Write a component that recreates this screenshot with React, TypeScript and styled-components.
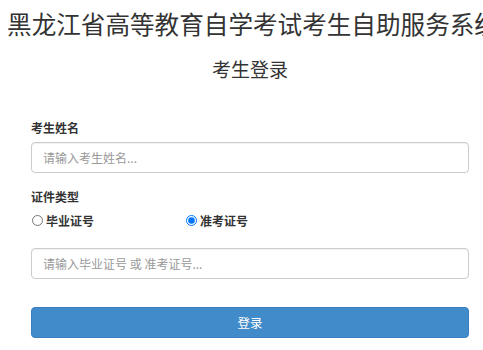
import React, { useState } from "react";
import styled, { createGlobalStyle } from "styled-components";

const GlobalStyle = createGlobalStyle`
  body {
    margin: 0;
    background: #fff;
    font-family: "Noto Sans CJK SC", "Liberation Sans", sans-serif;
    color: #333;
  }
`;

const Page = styled.div`
  width: 500px;
`;

const Title = styled.h1`
  margin: 0;
  padding-left: 6px;
  height: 46px;
  line-height: 46px;
  font-size: 24.6px;
  font-weight: normal;
  text-align: center;
  white-space: nowrap;
  color: #333;
`;

const SubTitle = styled.h2`
  margin: 4px 0 0;
  height: 38px;
  line-height: 38px;
  font-size: 19px;
  font-weight: normal;
  text-align: center;
  color: #333;
`;

const Form = styled.form`
  display: flex;
  flex-direction: column;
  padding: 31px 31px 0;
`;

const Label = styled.div<{ $top?: number }>`
  margin-top: ${p => p.$top ?? 0}px;
  line-height: 17px;
  font-size: 12px;
  font-weight: bold;
  color: #333;
`;

const Input = styled.input<{ $top: number }>`
  box-sizing: border-box;
  margin-top: ${p => p.$top}px;
  width: 100%;
  height: 31px;
  padding: 0 11px;
  border: 1px solid #ccc;
  border-radius: 4px;
  font-family: inherit;
  font-size: 12px;
  color: #555;
  box-shadow: inset 0 1px 1px rgba(0, 0, 0, 0.06);
  outline: none;
  &::placeholder {
    color: #999;
  }
`;

const RadioRow = styled.div`
  display: flex;
  margin-top: 7px;
  height: 16px;
  align-items: center;
`;

const RadioLabel = styled.label<{ $width?: number }>`
  display: flex;
  align-items: center;
  width: ${p => (p.$width ? `${p.$width}px` : "auto")};
  font-size: 12px;
  font-weight: bold;
  color: #333;
  cursor: pointer;
`;

const Radio = styled.input`
  width: 11px;
  height: 11px;
  margin: 0 3px 0 1px;
`;

const Button = styled.button`
  margin-top: 28px;
  height: 31px;
  width: 100%;
  border: 1px solid #3a80c0;
  border-radius: 4px;
  background: #428bca;
  color: #fff;
  font-family: inherit;
  font-size: 12.5px;
  cursor: pointer;
`;

export default function App() {
  const [kind, setKind] = useState("zkz");
  return (
    <Page>
      <GlobalStyle />
      <Title>黑龙江省高等教育自学考试考生自助服务系统</Title>
      <SubTitle>考生登录</SubTitle>
      <Form onSubmit={e => e.preventDefault()}>
        <Label>考生姓名</Label>
        <Input $top={6} placeholder="请输入考生姓名..." />
        <Label $top={15}>证件类型</Label>
        <RadioRow>
          <RadioLabel $width={154}>
            <Radio type="radio" name="kind" checked={kind === "byz"} onChange={() => setKind("byz")} />
            毕业证号
          </RadioLabel>
          <RadioLabel>
            <Radio type="radio" name="kind" checked={kind === "zkz"} onChange={() => setKind("zkz")} />
            准考证号
          </RadioLabel>
        </RadioRow>
        <Input $top={20} placeholder="请输入毕业证号 或 准考证号..." />
        <Button type="submit">登录</Button>
      </Form>
    </Page>
  );
}
